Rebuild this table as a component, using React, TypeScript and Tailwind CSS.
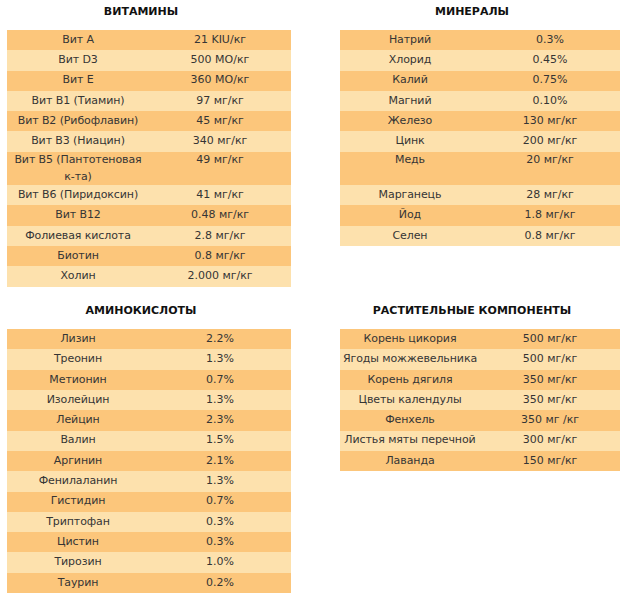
import React from "react";

type Row = [React.ReactNode, string, boolean?];

const vitamins: Row[] = [
  ["Вит A", "21 KIU/кг"],
  ["Вит D3", "500 МО/кг"],
  ["Вит E", "360 МО/кг"],
  ["Вит B1 (Тиамин)", "97 мг/кг"],
  ["Вит B2 (Рибофлавин)", "45 мг/кг"],
  ["Вит B3 (Ниацин)", "340 мг/кг"],
  [
    <>
      Вит B5 (Пантотеновая
      <br />
      к-та)
    </>,
    "49 мг/кг",
    true,
  ],
  ["Вит B6 (Пиридоксин)", "41 мг/кг"],
  ["Вит B12", "0.48 мг/кг"],
  ["Фолиевая кислота", "2.8 мг/кг"],
  ["Биотин", "0.8 мг/кг"],
  ["Холин", "2.000 мг/кг"],
];

const minerals: Row[] = [
  ["Натрий", "0.3%"],
  ["Хлорид", "0.45%"],
  ["Калий", "0.75%"],
  ["Магний", "0.10%"],
  ["Железо", "130 мг/кг"],
  ["Цинк", "200 мг/кг"],
  ["Медь", "20 мг/кг", true],
  ["Марганець", "28 мг/кг"],
  ["Йод", "1.8 мг/кг"],
  ["Селен", "0.8 мг/кг"],
];

const amino: Row[] = [
  ["Лизин", "2.2%"],
  ["Треонин", "1.3%"],
  ["Метионин", "0.7%"],
  ["Изолейцин", "1.3%"],
  ["Лейцин", "2.3%"],
  ["Валин", "1.5%"],
  ["Аргинин", "2.1%"],
  ["Фенилаланин", "1.3%"],
  ["Гистидин", "0.7%"],
  ["Триптофан", "0.3%"],
  ["Цистин", "0.3%"],
  ["Тирозин", "1.0%"],
  ["Таурин", "0.2%"],
];

const plants: Row[] = [
  ["Корень цикория", "500 мг/кг"],
  ["Ягоды можжевельника", "500 мг/кг"],
  ["Корень дягиля", "350 мг/кг"],
  ["Цветы календулы", "350 мг/кг"],
  ["Фенхель", "350 мг /кг"],
  ["Листья мяты перечной", "300 мг/кг"],
  ["Лаванда", "150 мг/кг"],
];

function Table({ title, rows }: { title: string; rows: Row[] }) {
  return (
    <div className="flex flex-col">
      <div className="h-[30px] pt-[2.5px] pr-[16px] text-center text-[11px] leading-[17px] font-bold text-[#111]">
        {title}
      </div>
      <div className="flex flex-col">
        {rows.map(([a, b, tall], i) => (
          <div
            key={i}
            className={
              "grid grid-cols-2 text-[11px] leading-[16.7px] text-[#353535] " +
              (i % 2 === 0 ? "bg-[#fcc67b] " : "bg-[#fde1ad] ") +
              (tall ? "h-[33.4px] items-start pt-[0.5px]" : "h-[20.3px] items-center")
            }
          >
            <div className="flex justify-center text-center whitespace-nowrap tracking-[-0.1px]">
              <span>{a}</span>
            </div>
            <div className="flex justify-center text-center whitespace-nowrap">
              <span>{b}</span>
            </div>
          </div>
        ))}
      </div>
    </div>
  );
}

export default function App() {
  return (
    <div
      className="w-[629px] h-[600px] bg-white overflow-hidden"
      style={{ fontFamily: '"DejaVu Sans", Verdana, sans-serif' }}
    >
      <div className="grid grid-cols-[284px_280px] gap-x-[49px] gap-y-[12.5px] pl-[7px] items-start">
        <Table title="ВИТАМИНЫ" rows={vitamins} />
        <Table title="МИНЕРАЛЫ" rows={minerals} />
        <Table title="АМИНОКИСЛОТЫ" rows={amino} />
        <Table title="РАСТИТЕЛЬНЫЕ КОМПОНЕНТЫ" rows={plants} />
      </div>
    </div>
  );
}
